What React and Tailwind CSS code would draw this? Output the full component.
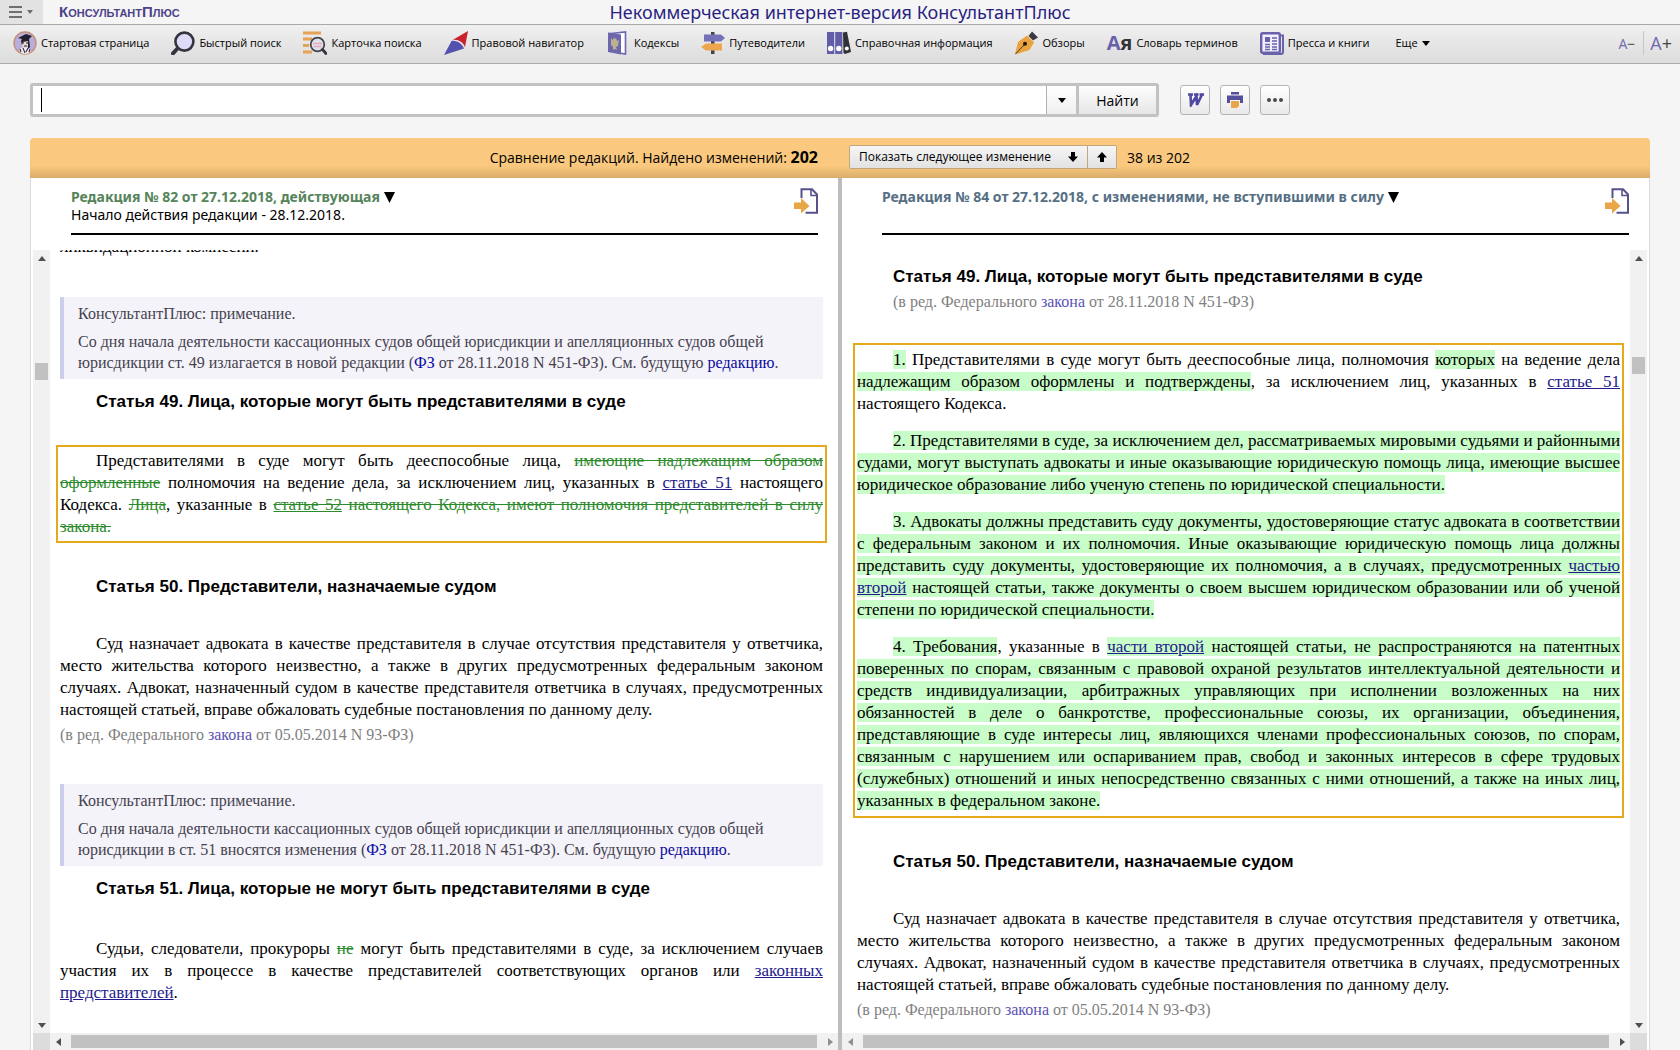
const svgProps = { width: 24, height: 24, viewBox: "0 0 24 24", className: "shrink-0", "aria-hidden": true };

const PortraitIcon = () => (
  <svg {...svgProps}>
    <circle cx="12" cy="12" r="11" fill="#b9aedb" stroke="#c58f78" strokeWidth="1.4" />
    <path d="M6 20c1-3 3-4 6-4s5 1 6 4c-2 2-4 3-6 3s-4-1-6-3z" fill="#f3f0f6" />
    <path d="M9 9l5-1 1 6-2 3h-2l-2-3z" fill="#e9dccb" />
    <path d="M5 7l8-4 6 2-3 3 1 8-2 2 0-8-5 1-1 3-1-4 1-2z" fill="#221f2c" />
    <path d="M9 12h2M13 12h2M11 15h3" stroke="#221f2c" strokeWidth="1" />
    <path d="M10 17l2 5M15 17l-2 4M7 18l1 3M17 18l-1 3" stroke="#3a3346" strokeWidth="1.2" />
  </svg>
);
const SearchIcon = () => (
  <svg {...svgProps}>
    <path d="M6.5 17.5L2 22.3" stroke="#35353d" strokeWidth="4" strokeLinecap="round" />
    <circle cx="13.4" cy="10.6" r="9" fill="#dcdcf8" stroke="#35353d" strokeWidth="2.6" />
  </svg>
);
const CardIcon = () => (
  <svg {...svgProps}>
    <path d="M0 2h18M0 8h9M0 14.500h6M0 21h9" stroke="#e5a455" strokeWidth="3" />
    <circle cx="14.500" cy="13.500" r="6.800" fill="#dfe0ee" stroke="#44444c" strokeWidth="1.800" />
    <path d="M10 12.500h9M10.500 15.500h8" stroke="#eba9b5" strokeWidth="1.600" />
    <path d="M19.500 18.500L23 22.500" stroke="#35353d" strokeWidth="2.800" strokeLinecap="round" />
  </svg>
);
const CompassIcon = () => (
  <svg {...svgProps}>
    <path d="M24 0L21 16C19 11 14 8 8.500 9z" fill="#c8232c" />
    <path d="M0 24L7.500 10C13 9 18 13 20 17.500z" fill="#5450ae" />
  </svg>
);
const CodeIcon = () => (
  <svg {...svgProps}>
    <path d="M5 2.500L19.500 1V23l-6-1z" fill="#fff" stroke="#6b66ad" strokeWidth="1.600" />
    <path d="M2 1.500l13 2v20l-13-2.500z" fill="#6b66ad" />
    <path d="M5 7l2 2 1-3 1 2 1-1 1 3 2-1-1 6-2 1 1 3-2-1-2 1 0-3-2-2z" fill="#b9b18f" />
  </svg>
);
const SignIcon = () => (
  <svg {...svgProps}>
    <path d="M10 1h3.500v22H10z" fill="#44434a" />
    <path d="M3 3.500h17l4 3.500-4 3.500H3z" fill="#7570b8" />
    <path d="M21 12.500H5L0 16l5 3.500h16z" fill="#eda54e" />
  </svg>
);
const BindersIcon = () => (
  <svg {...svgProps}>
    <path d="M0 1h7.200v22H0zM8.200 1h7.200v22H8.200z" fill="#625da8" />
    <path d="M16 1.500l4-.8L24 21l-6 2-1.500-1z" fill="#303036" />
    <circle cx="3.600" cy="17.500" r="2.700" fill="#fff" />
    <circle cx="11.800" cy="17.500" r="2.700" fill="#fff" />
    <circle cx="19.800" cy="17.500" r="2" fill="#fff" />
  </svg>
);
const PenIcon = () => (
  <svg {...svgProps}>
    <path d="M14.500 5L18 .500 24 6.500 19 9.500z" fill="#3c3a40" />
    <path d="M1 23.500L4 11l9-6.500 7 7L15.500 19z" fill="#eba33f" />
    <path d="M1.500 23L10.500 13.500" stroke="#4a3a24" strokeWidth="1" />
    <circle cx="11" cy="12.800" r="2" fill="#1b1713" />
  </svg>
);
const GlossaryIcon = () => (
  <span className="flex items-baseline text-[20px] leading-6 font-bold text-[#6762ab]" aria-hidden="true">
    А<span className="text-[#33333a]">я</span>
  </span>
);
const PressIcon = () => (
  <svg {...svgProps}>
    <path d="M19 4.500h4V21a2 2 0 0 1-2 2H3" fill="none" stroke="#6762ab" strokeWidth="2" />
    <rect x="1.200" y="2.200" width="18.600" height="19.600" rx="1.500" fill="#f1effb" stroke="#6762ab" strokeWidth="2.400" />
    <path d="M5 6h5v5H5z" fill="#6762ab" />
    <path d="M5 13.500h5M5 16h5M5 18.500h5M12 7h5M12 10h5M12 13h5M12 16h5M12 18.500h5" stroke="#6762ab" strokeWidth="1.400" />
  </svg>
);
const ExportIcon = () => (
  <svg width="24" height="26" viewBox="0 0 24 26" className="shrink-0" aria-hidden="true">
    <path d="M7.500 10V1.200H18L23 6.500V24.800H11.500" fill="none" stroke="#57528c" strokeWidth="2" />
    <path d="M17 1v6.500h6" fill="none" stroke="#57528c" strokeWidth="1.600" />
    <path d="M0 14.500h7V10l8.500 8L7 25.500V21H0z" fill="#e9a646" />
  </svg>
);

const menu = [
  { label: "Стартовая страница", Icon: PortraitIcon },
  { label: "Быстрый поиск", Icon: SearchIcon },
  { label: "Карточка поиска", Icon: CardIcon },
  { label: "Правовой навигатор", Icon: CompassIcon },
  { label: "Кодексы", Icon: CodeIcon },
  { label: "Путеводители", Icon: SignIcon },
  { label: "Справочная информация", Icon: BindersIcon },
  { label: "Обзоры", Icon: PenIcon },
  { label: "Словарь терминов", Icon: GlossaryIcon },
  { label: "Пресса и книги", Icon: PressIcon },
];

const Down = () => (
  <svg width="8" height="5" viewBox="0 0 8 5" className="shrink-0" aria-hidden="true"><path d="M0 0h8L4 5z" fill="currentColor" /></svg>
);
const arrowPaths = { up: "M0 6l4-5 4 5z", down: "M0 2h8L4 7z", left: "M6 0v8L1 4z", right: "M2 0v8l5-4z" };
const BarArrow = ({ dir, label, className }) => (
  <button aria-label={label} className={`flex size-[17px] shrink-0 items-center justify-center ${className || "text-[#505050]"}`}>
    <svg width="8" height="8" viewBox="0 0 8 8" aria-hidden="true"><path d={arrowPaths[dir]} fill="currentColor" /></svg>
  </button>
);

const VBar = ({ thumb }) => (
  <div className="flex w-[17px] shrink-0 flex-col bg-[#f1f1f1]">
    <BarArrow dir="up" label="Вверх" />
    <div className={`flex-1 px-[2px] ${thumb}`}>
      <div className="h-[17px] bg-[#c1c1c1]" />
    </div>
    <BarArrow dir="down" label="Вниз" />
  </div>
);
const HBar = ({ leftClass, rightClass }) => (
  <div className="flex min-w-0 flex-1 bg-[#f1f1f1]">
    <BarArrow dir="left" label="Влево" className={leftClass} />
    <div className="mt-[2px] mb-[2px] ml-[4px] mr-[4px] flex-1 bg-[#c1c1c1]" />
    <BarArrow dir="right" label="Вправо" className={rightClass} />
  </div>
);

const Ins = ({ children }) => <ins className="bg-[#c8fcc8] no-underline">{children}</ins>;
const Del = ({ children }) => <del className="text-[#2b8a2b] line-through">{children}</del>;
const Ref = ({ children }) => <a href="#" className="text-[#231a8c] underline">{children}</a>;
const H = ({ children, className }) => (
  <h2 className={`pl-9 font-["Liberation_Sans",sans-serif] text-[17px] leading-[22px] font-bold ${className || ""}`}>{children}</h2>
);
const P = ({ children, className }) => <p className={`indent-9 text-justify ${className || ""}`}>{children}</p>;
const Edited = ({ children, className }) => (
  <p className={`mt-[3px] text-base leading-[22px] text-[#808080] ${className || ""}`}>
    (в ред. Федерального <a href="#" className="text-[#5a50b4]">закона</a> {children})
  </p>
);
const Note = ({ children, className }) => (
  <aside className={`border-l-4 border-[#cdcdec] bg-[#f4f3f9] pt-[6px] pr-4 pb-[6px] pl-[14px] text-base leading-[21px] text-[#45424f] ${className}`}>
    <p>КонсультантПлюс: примечание.</p>
    <p className="mt-[7px]">{children}</p>
  </aside>
);
const Blue = ({ children }) => <a href="#" className="text-[#0a0aa0]">{children}</a>;
const Article50 = () => (
  <>
    <H className="mt-[33px]">Статья 50. Представители, назначаемые судом</H>
    <P className="mt-[35px]">
      Суд назначает адвоката в качестве представителя в случае отсутствия представителя у ответчика, место жительства
      которого неизвестно, а также в других предусмотренных федеральным законом случаях. Адвокат, назначенный судом в
      качестве представителя ответчика в случаях, предусмотренных настоящей статьей, вправе обжаловать судебные
      постановления по данному делу.
    </P>
    <Edited>от 05.05.2014 N 93-ФЗ</Edited>
  </>
);

const PaneHeader = ({ title, note, color, className }) => (
  <header className={`flex h-[57px] shrink-0 items-start justify-between border-b-2 border-black pt-[10px] font-["Noto_Sans",sans-serif] text-[14px] leading-[18px] ${className}`}>
    <div>
      <button className={`flex items-center gap-1 font-bold ${color}`}>
        {title}
        <svg width="11" height="11" viewBox="0 0 11 11" className="text-black" aria-hidden="true"><path d="M0 0h11L5.500 11z" fill="currentColor" /></svg>
      </button>
      {note && <p>{note}</p>}
    </div>
    <button aria-label="Открыть редакцию"><ExportIcon /></button>
  </header>
);

const toolButton = "flex size-[30px] items-center justify-center rounded-[3px] border border-[#b4b4b4] bg-linear-to-b from-white to-[#e9e9e9]";

export default function App() {
  return (
    <div className='flex h-screen flex-col overflow-hidden bg-[#f5f5f5] font-["Open_Sans","Noto_Sans",sans-serif] text-black'>
      <div className="grid h-[25px] shrink-0 grid-cols-[1fr_auto_1fr] items-center border-b border-[#a9a9a9]">
        <div className="flex h-full items-center">
          <button aria-label="Меню" className="flex h-full w-[43px] items-center gap-[5px] bg-[#e2e2e2] pl-[9px] text-[#6e6e6e]">
            <svg width="13" height="12" viewBox="0 0 13 12" aria-hidden="true"><path d="M0 1h13M0 6h13M0 11h13" stroke="currentColor" strokeWidth="2" /></svg>
            <svg width="6" height="4" viewBox="0 0 6 4" aria-hidden="true"><path d="M0 0h6L3 4z" fill="currentColor" /></svg>
          </button>
          <a href="#" className='ml-4 font-["Liberation_Sans",sans-serif] text-[15px] font-bold text-[#4d4388] [font-variant-caps:small-caps]'>КонсультантПлюс</a>
        </div>
        <h1 className='font-["Noto_Sans",sans-serif] text-[18px] leading-[22px] text-[#2b1f82]'>Некоммерческая интернет-версия КонсультантПлюс</h1>
      </div>

      <nav className="flex h-[39px] shrink-0 items-center border-b border-[#a9a9a9] bg-linear-to-b from-[#f0f0f0] to-[#dcdcdc] pr-2 pb-[2px] pl-[13px] text-[11px]">
        <div className="flex items-center gap-[22px]">
          {menu.map(({ label, Icon }) => (
            <a key={label} href="#" className="flex items-center gap-1 whitespace-nowrap"><Icon />{label}</a>
          ))}
          <button className="ml-1 flex items-center gap-1 whitespace-nowrap">Еще <Down /></button>
        </div>
        <div className="ml-auto flex items-center text-[#6f69ad]">
          <button aria-label="Уменьшить шрифт" className="flex items-center pr-2 text-[14px]">А<span className="text-[#444]">−</span></button>
          <button aria-label="Увеличить шрифт" className="flex items-center border-l border-[#c6c6c6] pl-[6px] text-[18px] leading-6">А<span className="text-[#444]">+</span></button>
        </div>
      </nav>

      <form className="flex shrink-0 items-center px-[30px] pt-[19px]" onSubmit={(e) => e.preventDefault()}>
        <div className="flex h-[34px] flex-1 items-stretch rounded-[3px] border-[3px] border-[#c2c2c2] bg-white">
          <div className="my-[2px] ml-2 w-px bg-black" />
          <input aria-label="Поиск" className="min-w-0 flex-1 bg-white px-1 text-base outline-none" />
          <button type="button" aria-label="Список запросов" className="flex w-[30px] items-center justify-center border-l border-[#b0b0b0] bg-linear-to-b from-white to-[#efefef]"><Down /></button>
          <button className="w-20 border-l-[3px] border-[#c2c2c2] bg-linear-to-b from-[#fdfdfd] to-[#e6e6e6] text-[14px]">Найти</button>
        </div>
        <div className="mr-[360px] ml-[21px] flex gap-[10px]">
          <button type="button" aria-label="Экспорт в Word" className={toolButton}>
            <svg width="17" height="14" viewBox="0 0 17 14" aria-hidden="true"><path d="M1 1.500h5M7 1.500h4.500M12.500 1.500H17M3.500 1.500L4 12 9.500 3 10 12 15 1.500" fill="none" stroke="#5049a3" strokeWidth="2.600" /></svg>
          </button>
          <button type="button" aria-label="Печать" className={toolButton}>
            <svg width="16" height="16" viewBox="0 0 16 16" aria-hidden="true">
              <path d="M4 0h8v2.500H4zM0 3.500h16V11h-3V8H3v3H0z" fill="#544e9d" />
              <path d="M4 9h8v5l-2 2H4z" fill="#e9a54a" />
            </svg>
          </button>
          <button type="button" aria-label="Ещё" className={toolButton}>
            <svg width="16" height="4" viewBox="0 0 16 4" aria-hidden="true"><path d="M2 2h.01M8 2h.01M14 2h.01" stroke="#4a4a4a" strokeWidth="4" strokeLinecap="round" /></svg>
          </button>
        </div>
      </form>

      <main className="mx-[30px] mt-[21px] flex min-h-0 flex-1 flex-col">
        <div className="grid h-10 shrink-0 grid-cols-2 items-center rounded-t-[4px] bg-linear-to-b from-[#fac87e] from-70% to-[#d9ad69] pb-[2px] text-[14px]">
          <p className="pr-[22px] text-right">Сравнение редакций. Найдено изменений: <b className="text-base leading-5">202</b></p>
          <div className="flex items-center pl-[9px]">
            <button className="flex h-6 w-[239px] items-center justify-between rounded-l-[2px] border border-[#c2a67c] bg-linear-to-b from-[#f6f6f6] to-[#e2e2e2] px-[9px] text-[12px] whitespace-nowrap">
              Показать следующее изменение
              <svg width="10" height="10" viewBox="0 0 10 10" aria-hidden="true"><path d="M3 0h4v4.500h3L5 10 0 4.500h3z" fill="#000" /></svg>
            </button>
            <button aria-label="Предыдущее изменение" className="flex h-6 w-[29px] items-center justify-center rounded-r-[2px] border border-l-0 border-[#c2a67c] bg-linear-to-b from-[#f6f6f6] to-[#e2e2e2]">
              <svg width="10" height="10" viewBox="0 0 10 10" aria-hidden="true"><path d="M3 10h4V5.500h3L5 0 0 5.500h3z" fill="#000" /></svg>
            </button>
            <span className="ml-[10px]">38 из 202</span>
          </div>
        </div>

        <div className="flex min-h-0 flex-1 border-x border-[#dadada] bg-white">
          <section className="flex min-w-0 flex-1 flex-col pl-[2px]">
            <PaneHeader title="Редакция № 82 от 27.12.2018, действующая" note="Начало действия редакции - 28.12.2018." color="text-[#56845a]" className="mr-[20px] ml-[38px]" />
            <div className="mt-[15px] flex min-h-0 flex-1">
              <VBar thumb="pt-[96px]" />
              <div className='min-w-0 flex-1 overflow-hidden pr-[15px] pl-[10px] font-["Liberation_Serif",serif] text-[17px] leading-[22px]'>
                <p className="-mt-[14px]">ликвидационной комиссии.</p>
                <Note className="mt-[39px]">
                  Со дня начала деятельности кассационных судов общей юрисдикции и апелляционных судов общей юрисдикции ст. 49
                  излагается в новой редакции (<Blue>ФЗ</Blue> от 28.11.2018 N 451-ФЗ). См. будущую <Blue>редакцию</Blue>.
                </Note>
                <H className="mt-3">Статья 49. Лица, которые могут быть представителями в суде</H>
                <div className="-mx-1 mt-8 border-2 border-[#e5a91c] px-[2px] py-[3px]">
                  <P>
                    Представителями в суде могут быть дееспособные лица, <Del>имеющие надлежащим образом оформленные</Del>{" "}
                    полномочия на ведение дела, за исключением лиц, указанных в <Ref>статье 51</Ref> настоящего Кодекса.{" "}
                    <Del>Лица</Del>, указанные в <Del><a href="#" className="underline">статье 52</a> настоящего Кодекса, имеют
                    полномочия представителей в силу закона.</Del>
                  </P>
                </div>
                <Article50 />
                <Note className="mt-[38px]">
                  Со дня начала деятельности кассационных судов общей юрисдикции и апелляционных судов общей юрисдикции в ст. 51
                  вносятся изменения (<Blue>ФЗ</Blue> от 28.11.2018 N 451-ФЗ). См. будущую <Blue>редакцию</Blue>.
                </Note>
                <H className="mt-3">Статья 51. Лица, которые не могут быть представителями в суде</H>
                <P className="mt-[38px]">
                  Судьи, следователи, прокуроры <Del>не</Del> могут быть представителями в суде, за исключением случаев участия
                  их в процессе в качестве представителей соответствующих органов или <Ref>законных представителей</Ref>.
                </P>
              </div>
            </div>
            <div className="flex h-[17px] shrink-0">
              <div className="w-[17px] bg-[#dcdcdc]" />
              <HBar rightClass="text-[#909090]" />
            </div>
          </section>

          <div className="w-1 shrink-0 bg-[#bdbdbd]" />

          <section className="flex min-w-0 flex-1 flex-col pr-[2px]">
            <PaneHeader title="Редакция № 84 от 27.12.2018, с изменениями, не вступившими в силу" color="text-[#566f84]" className="mr-[18px] ml-[40px]" />
            <div className="mt-[15px] flex min-h-0 flex-1">
              <div className='min-w-0 flex-1 overflow-hidden pt-4 pr-[10px] pl-[15px] font-["Liberation_Serif",serif] text-[17px] leading-[22px]'>
                <H>Статья 49. Лица, которые могут быть представителями в суде</H>
                <Edited className="pl-9">от 28.11.2018 N 451-ФЗ</Edited>
                <div className="-mx-1 mt-[30px] flex flex-col gap-[15px] border-2 border-[#e5a91c] px-[2px] py-1">
                  <P>
                    <Ins>1.</Ins> Представителями в суде могут быть дееспособные лица, полномочия <Ins>которых</Ins> на ведение
                    дела <Ins>надлежащим образом оформлены и подтверждены</Ins>, за исключением лиц, указанных в{" "}
                    <Ref>статье 51</Ref> настоящего Кодекса.
                  </P>
                  <P>
                    <Ins>2. Представителями в суде, за исключением дел, рассматриваемых мировыми судьями и районными судами,
                    могут выступать адвокаты и иные оказывающие юридическую помощь лица, имеющие высшее юридическое образование
                    либо ученую степень по юридической специальности.</Ins>
                  </P>
                  <P>
                    <Ins>3. Адвокаты должны представить суду документы, удостоверяющие статус адвоката в соответствии с
                    федеральным законом и их полномочия. Иные оказывающие юридическую помощь лица должны представить суду
                    документы, удостоверяющие их полномочия, а в случаях, предусмотренных <Ref>частью второй</Ref> настоящей
                    статьи, также документы о своем высшем юридическом образовании или об ученой степени по юридической
                    специальности.</Ins>
                  </P>
                  <P>
                    <Ins>4. Требования</Ins>, указанные в <Ins><Ref>части второй</Ref> настоящей статьи, не распространяются на
                    патентных поверенных по спорам, связанным с правовой охраной результатов интеллектуальной деятельности и
                    средств индивидуализации, арбитражных управляющих при исполнении возложенных на них обязанностей в деле о
                    банкротстве, профессиональные союзы, их организации, объединения, представляющие в суде интересы лиц,
                    являющихся членами профессиональных союзов, по спорам, связанным с нарушением или оспариванием прав, свобод
                    и законных интересов в сфере трудовых (служебных) отношений и иных непосредственно связанных с ними
                    отношений, а также на иных лиц, указанных в федеральном законе.</Ins>
                  </P>
                </div>
                <Article50 />
              </div>
              <VBar thumb="pt-[90px]" />
            </div>
            <div className="flex h-[17px] shrink-0">
              <HBar leftClass="text-[#909090]" />
              <div className="w-[17px] bg-[#dcdcdc]" />
            </div>
          </section>
        </div>
      </main>
    </div>
  );
}
